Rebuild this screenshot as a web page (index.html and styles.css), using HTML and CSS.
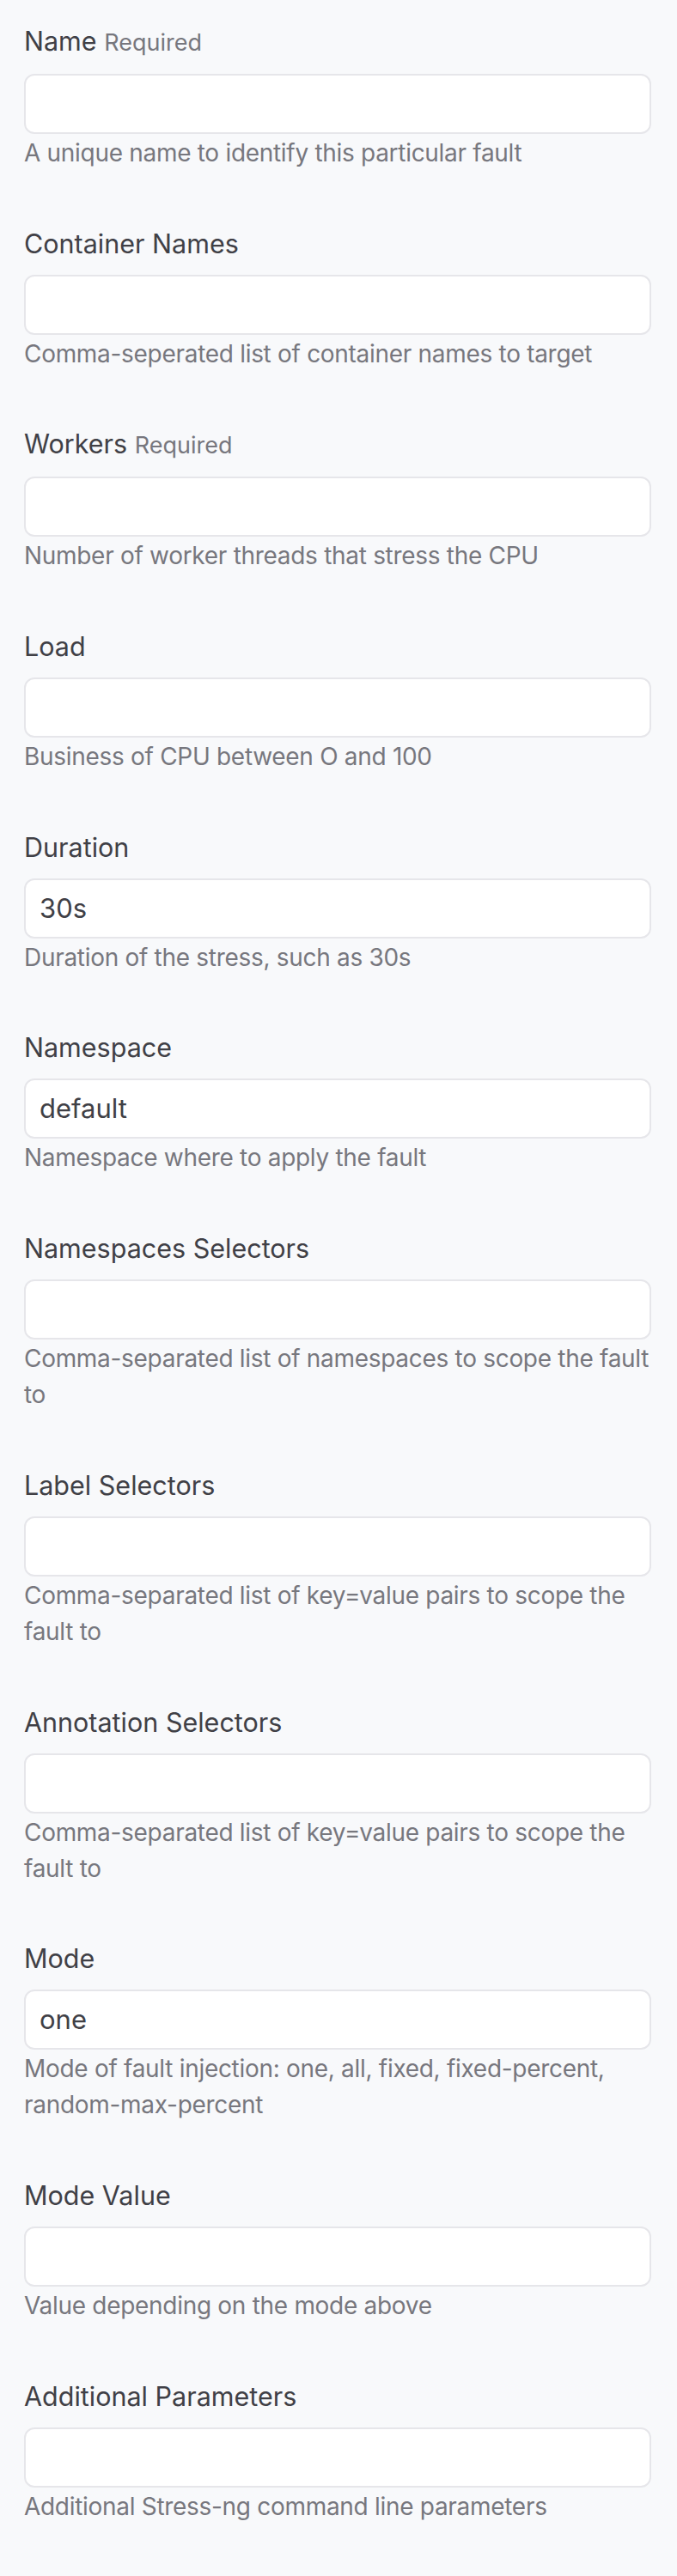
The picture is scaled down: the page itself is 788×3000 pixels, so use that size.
FILE: index.html
```html
<!DOCTYPE html>
<html lang="en">
<head>
<meta charset="utf-8">
<title>Stress CPU fault</title>
<link rel="stylesheet" href="styles.css">
</head>
<body>
<form class="form">
  <div class="field">
    <label class="label">Name <span class="req">Required</span></label>
    <div class="input"></div>
    <p class="desc">A unique name to identify this particular fault</p>
  </div>
  <div class="field">
    <label class="label">Container Names</label>
    <div class="input"></div>
    <p class="desc">Comma-seperated list of container names to target</p>
  </div>
  <div class="field">
    <label class="label">Workers <span class="req">Required</span></label>
    <div class="input"></div>
    <p class="desc">Number of worker threads that stress the CPU</p>
  </div>
  <div class="field">
    <label class="label">Load</label>
    <div class="input"></div>
    <p class="desc">Business of CPU between O and 100</p>
  </div>
  <div class="field">
    <label class="label">Duration</label>
    <div class="input">30s</div>
    <p class="desc">Duration of the stress, such as 30s</p>
  </div>
  <div class="field">
    <label class="label">Namespace</label>
    <div class="input">default</div>
    <p class="desc">Namespace where to apply the fault</p>
  </div>
  <div class="field">
    <label class="label">Namespaces Selectors</label>
    <div class="input"></div>
    <p class="desc">Comma-separated list of namespaces to scope the fault to</p>
  </div>
  <div class="field">
    <label class="label">Label Selectors</label>
    <div class="input"></div>
    <p class="desc">Comma-separated list of key=value pairs to scope the fault to</p>
  </div>
  <div class="field">
    <label class="label">Annotation Selectors</label>
    <div class="input"></div>
    <p class="desc">Comma-separated list of key=value pairs to scope the fault to</p>
  </div>
  <div class="field">
    <label class="label">Mode</label>
    <div class="input">one</div>
    <p class="desc">Mode of fault injection: one, all, fixed, fixed-percent, random-max-percent</p>
  </div>
  <div class="field">
    <label class="label">Mode Value</label>
    <div class="input"></div>
    <p class="desc">Value depending on the mode above</p>
  </div>
  <div class="field">
    <label class="label">Additional Parameters</label>
    <div class="input"></div>
    <p class="desc">Additional Stress-ng command line parameters</p>
  </div>
</form>
</body>
</html>
```
FILE: styles.css
```css
html, body {
  margin: 0;
  padding: 0;
  background: #f8f9fb;
}
body {
  font-family: Inter, "Liberation Sans", sans-serif;
  color: #404046;
}
.form {
  display: flex;
  flex-direction: column;
  gap: 64.7px;
  padding: 28px 30px 40px 28px;
}
.field {
  display: flex;
  flex-direction: column;
}
.label {
  font-size: 30.5px;
  line-height: 40px;
  color: #404046;
  margin-bottom: 16px;
}
.req {
  font-size: 27px;
  color: #77777e;
}
.input {
  box-sizing: border-box;
  height: 70px;
  background: #ffffff;
  border: 2px solid #e6e6ea;
  border-radius: 12px;
  padding: 0 16px;
  font-size: 31px;
  line-height: 66px;
  color: #404046;
}
.desc {
  margin: 1px 0 0;
  font-size: 28px;
  line-height: 42px;
  letter-spacing: -0.3px;
  color: #77777e;
}
```
